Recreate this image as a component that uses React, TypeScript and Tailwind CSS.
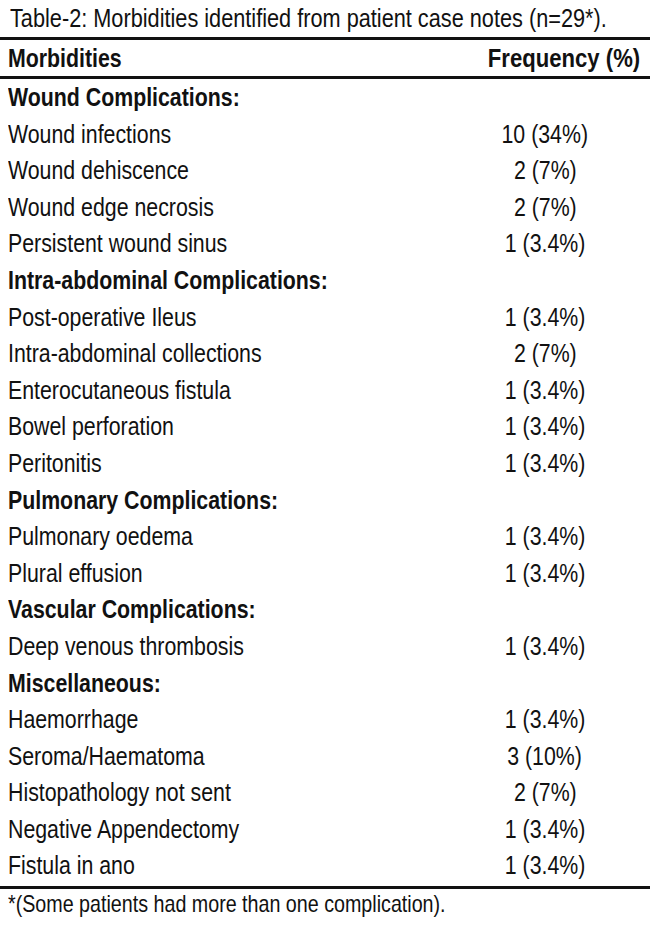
type Row = { label: string; value?: string; heading?: boolean };

const rows: Row[] = [
  { label: "Wound Complications:", heading: true },
  { label: "Wound infections", value: "10 (34%)" },
  { label: "Wound dehiscence", value: "2 (7%)" },
  { label: "Wound edge necrosis", value: "2 (7%)" },
  { label: "Persistent wound sinus", value: "1 (3.4%)" },
  { label: "Intra-abdominal Complications:", heading: true },
  { label: "Post-operative Ileus", value: "1 (3.4%)" },
  { label: "Intra-abdominal collections", value: "2 (7%)" },
  { label: "Enterocutaneous fistula", value: "1 (3.4%)" },
  { label: "Bowel perforation", value: "1 (3.4%)" },
  { label: "Peritonitis", value: "1 (3.4%)" },
  { label: "Pulmonary Complications:", heading: true },
  { label: "Pulmonary oedema", value: "1 (3.4%)" },
  { label: "Plural effusion", value: "1 (3.4%)" },
  { label: "Vascular Complications:", heading: true },
  { label: "Deep venous thrombosis", value: "1 (3.4%)" },
  { label: "Miscellaneous:", heading: true },
  { label: "Haemorrhage", value: "1 (3.4%)" },
  { label: "Seroma/Haematoma", value: "3 (10%)" },
  { label: "Histopathology not sent", value: "2 (7%)" },
  { label: "Negative Appendectomy", value: "1 (3.4%)" },
  { label: "Fistula in ano", value: "1 (3.4%)" },
];

// condensed look: Liberation Sans squeezed horizontally
const narrow = "inline-block whitespace-nowrap scale-x-[0.82]";

export default function App() {
  return (
    <div className="w-[650px] h-[926px] overflow-hidden bg-white text-[#111] font-['Liberation_Sans',Arial,sans-serif]">
      <p className="h-[37px] pl-[10px] text-[26px] leading-[37px] whitespace-nowrap">
        <span className="inline-block whitespace-nowrap scale-x-[0.835] origin-left">
          Table-2: Morbidities identified from patient case notes (n=29*).
        </span>
      </p>

      <div className="border-y-[3px] border-[#111]">
        <div className="grid grid-cols-[1fr_190px] h-[36px] pl-[8px] pr-[10px] items-center text-[26px] font-bold leading-[36px]">
          <span>
            <span className={`${narrow} origin-left`}>Morbidities</span>
          </span>
          <span className="text-right">
            <span className="inline-block whitespace-nowrap scale-x-[0.85] origin-right">
              Frequency (%)
            </span>
          </span>
        </div>
      </div>

      <div className="border-b-[3px] border-[#111] pb-[2px]">
        {rows.map((row) => (
          <div
            key={row.label}
            className="grid grid-cols-[1fr_190px] h-[36.6px] pl-[8px] pr-[10px] items-center text-[26px] leading-[36.6px]"
          >
            <span className={row.heading ? "font-bold" : ""}>
              <span className={`${narrow} origin-left`}>{row.label}</span>
            </span>
            <span className="text-center">
              {row.value && <span className={`${narrow} origin-center`}>{row.value}</span>}
            </span>
          </div>
        ))}
      </div>

      <p className="pl-[8px] text-[24px] leading-[30px] whitespace-nowrap">
        <span className={`${narrow} origin-left`}>
          *(Some patients had more than one complication).
        </span>
      </p>
    </div>
  );
}
